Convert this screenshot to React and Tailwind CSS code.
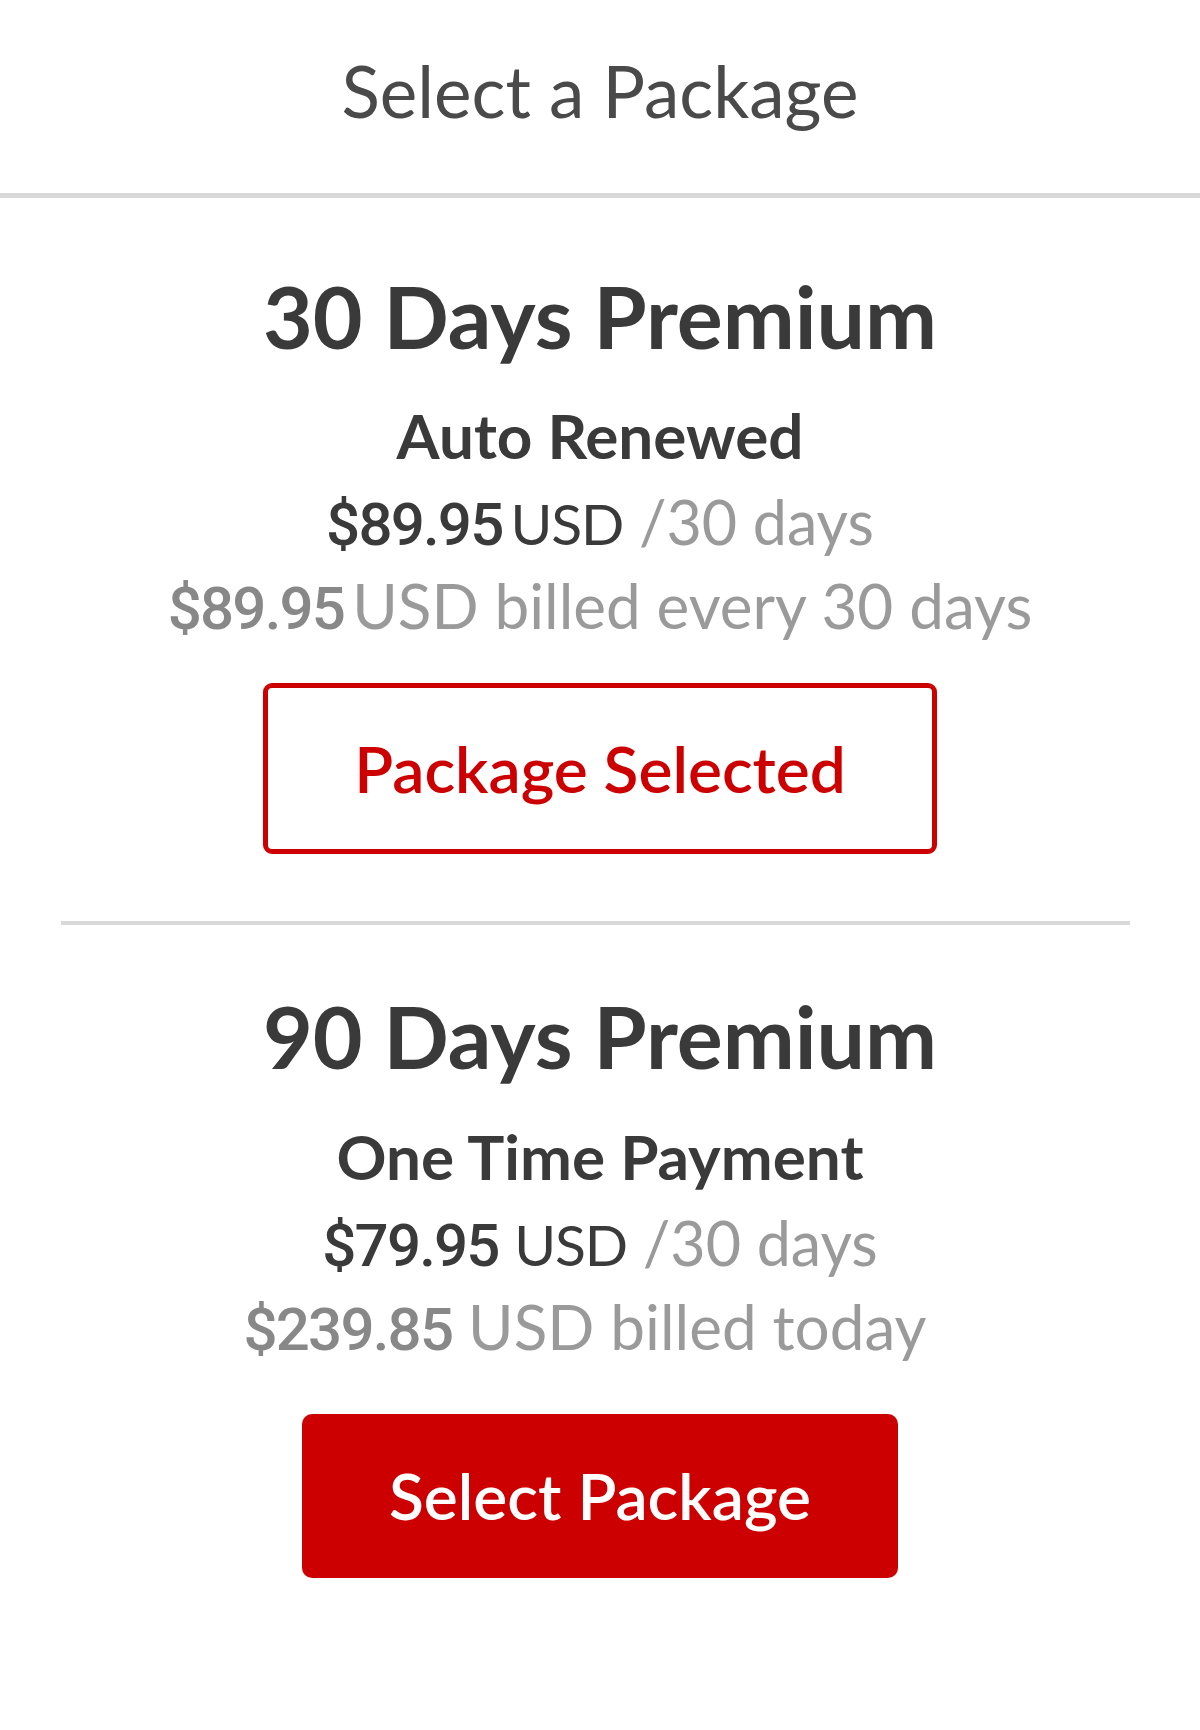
import React from "react";

const lato = "font-['Lato','Noto_Sans',sans-serif]";
const digits = "font-['Roboto','Liberation_Sans',sans-serif]";

function PriceLine({ amount, spaced, per }) {
  return (
    <div className="leading-[86px] text-[61px] text-[#3a3a3a]">
      <span className={`${digits} font-medium text-[60px] tracking-[-0.03em] text-[#3a3a3a]`}>{amount}</span>
      {spaced ? " " : <span className="inline-block w-[8px]" />}
      <span className="text-[57px] tracking-[-0.02em] text-[#3a3a3a]">USD</span>{" "}
      <span className="text-[#9a9a9a]">{per}</span>
    </div>
  );
}

function BillLine({ amount, spaced, rest, trail }) {
  return (
    <div className="leading-[75px] text-[62px] text-[#999]">
      <span className={`${digits} font-medium text-[60px] tracking-[-0.03em] text-[#888]`}>{amount}</span>
      {spaced ? " " : <span className="inline-block w-[8px]" />}
      <span className="text-[#9a9a9a]">{rest}</span>
      {trail ? <span className="inline-block w-[30px]" /> : null}
    </div>
  );
}

export default function App() {
  return (
    <div className={`${lato} w-full min-h-[1730px] bg-white text-center`}>
      <header className="h-[198px] flex items-center justify-center pb-[12px] border-b-[5px] border-[#d9d9d9]">
        <h1 className="text-[71px] font-normal text-[#4a4a4a] leading-none">Select a Package</h1>
      </header>

      <section className="pt-[68px] flex flex-col items-center">
        <h2 className="text-[86px] font-bold text-[#3a3a3a] leading-[100px]">30 Days Premium</h2>
        <div className="mt-[25px] text-[62px] font-bold text-[#3a3a3a] leading-[88px]">Auto Renewed</div>
        <PriceLine amount="$89.95" per="/30 days" />
        <BillLine amount="$89.95" rest="USD billed every 30 days" />
        <button className="mt-[37px] w-[674px] h-[171px] border-[5px] border-[#cc0000] rounded-[9px] bg-white text-[#cc0000] text-[64px] font-semibold">
          Package Selected
        </button>
      </section>

      <div className="mt-[67px] ml-[61px] mr-[70px] h-[4px] bg-[#d9d9d9]" />

      <section className="pt-[61px] flex flex-col items-center">
        <h2 className="text-[86px] font-bold text-[#3a3a3a] leading-[100px]">90 Days Premium</h2>
        <div className="mt-[26px] text-[62px] font-bold text-[#3a3a3a] leading-[88px]">One Time Payment</div>
        <PriceLine amount="$79.95" spaced per="/30 days" />
        <BillLine amount="$239.85" spaced rest="USD billed today" trail />
        <button className="mt-[47px] w-[596px] h-[164px] rounded-[10px] bg-[#cc0000] text-white text-[64px] font-semibold">
          Select Package
        </button>
      </section>
    </div>
  );
}
